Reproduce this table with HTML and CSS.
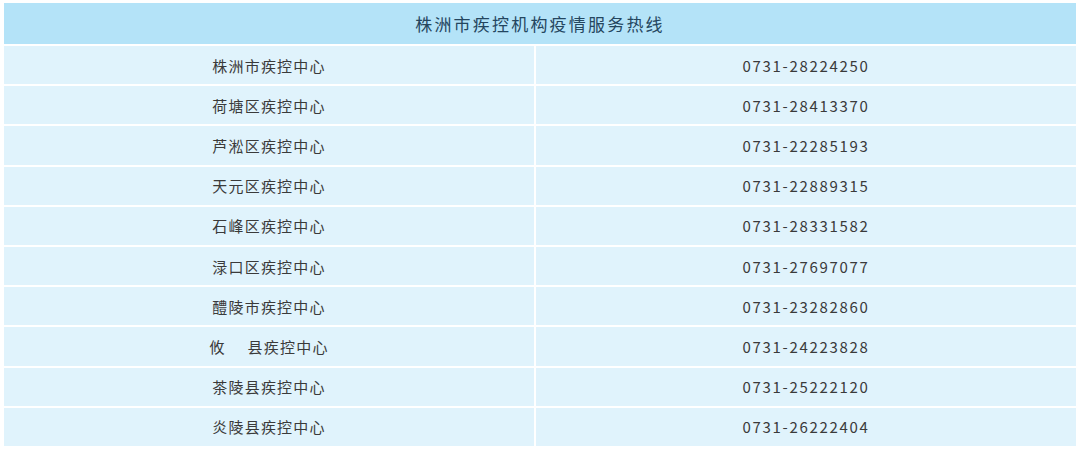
FILE: index.html
```html
<!DOCTYPE html>
<html lang="zh">
<head>
<meta charset="utf-8">
<link rel="stylesheet" href="styles.css">
</head>
<body>
<div class="table">
  <div class="head">株洲市疾控机构疫情服务热线</div>
  <div class="row"><div class="cell name">株洲市疾控中心</div><div class="cell tel">0731-28224250</div></div>
  <div class="row"><div class="cell name">荷塘区疾控中心</div><div class="cell tel">0731-28413370</div></div>
  <div class="row"><div class="cell name">芦淞区疾控中心</div><div class="cell tel">0731-22285193</div></div>
  <div class="row"><div class="cell name">天元区疾控中心</div><div class="cell tel">0731-22889315</div></div>
  <div class="row"><div class="cell name">石峰区疾控中心</div><div class="cell tel">0731-28331582</div></div>
  <div class="row"><div class="cell name">渌口区疾控中心</div><div class="cell tel">0731-27697077</div></div>
  <div class="row"><div class="cell name">醴陵市疾控中心</div><div class="cell tel">0731-23282860</div></div>
  <div class="row"><div class="cell name">攸<span class="gap"></span>县疾控中心</div><div class="cell tel">0731-24223828</div></div>
  <div class="row"><div class="cell name">茶陵县疾控中心</div><div class="cell tel">0731-25222120</div></div>
  <div class="row"><div class="cell name">炎陵县疾控中心</div><div class="cell tel">0731-26222404</div></div>
</div>
</body>
</html>
```
FILE: styles.css
```css
html, body {
  margin: 0;
  padding: 0;
  background: #ffffff;
}
body {
  font-family: "Noto Sans CJK SC", "Noto Sans", sans-serif;
}
.table {
  width: 1072px;
  margin: 3px 4px 0 4px;
  display: flex;
  flex-direction: column;
  gap: 2px;
}
.head {
  height: 41px;
  background: #b4e3f8;
  color: #24465f;
  font-size: 17px;
  letter-spacing: 2.2px;
  display: flex;
  align-items: center;
  justify-content: center;
}
.row {
  display: grid;
  grid-template-columns: 530px 540px;
  column-gap: 2px;
  height: 38.2px;
}
.cell {
  background: #e0f3fc;
  color: #3a3a3a;
  font-size: 15px;
  letter-spacing: 1.2px;
  display: flex;
  align-items: center;
  justify-content: center;
}
.tel {
  letter-spacing: 1.7px;
}
.gap {
  display: inline-block;
  width: 22px;
}
```
